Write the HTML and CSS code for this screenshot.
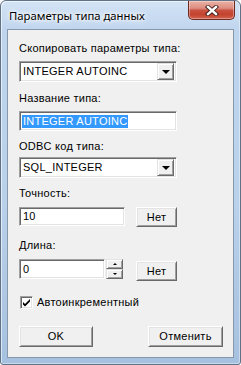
FILE: index.html
```html
<!DOCTYPE html>
<html lang="ru">
<head>
<meta charset="utf-8">
<title>Параметры типа данных</title>
<link rel="stylesheet" href="styles.css">
</head>
<body>
<div class="window">
  <div class="titlebar">
    <span class="title">Параметры типа данных</span>
    <div class="close">
      <svg width="14" height="11" viewBox="0 0 14 11">
        <path d="M3 2 L11 9 M11 2 L3 9" stroke="#3a1a16" stroke-width="4.2" stroke-linecap="square" fill="none"/>
        <path d="M3 2 L11 9 M11 2 L3 9" stroke="#ffffff" stroke-width="2.4" stroke-linecap="square" fill="none"/>
      </svg>
    </div>
  </div>
  <div class="client">
    <div class="label l1">Скопировать параметры типа:</div>
    <div class="field combo c1">
      <span class="val">INTEGER AUTOINC</span>
      <span class="drop"><span class="tri"></span></span>
    </div>
    <div class="label l2">Название типа:</div>
    <div class="field edit e2"><span class="sel">INTEGER AUTOINC</span></div>
    <div class="label l3">ODBC код типа:</div>
    <div class="field combo c2">
      <span class="val">SQL_INTEGER</span>
      <span class="drop"><span class="tri"></span></span>
    </div>
    <div class="label l4">Точность:</div>
    <div class="row r1">
      <div class="field edit e3"><span class="val">10</span></div>
      <div class="btn no1">Нет</div>
    </div>
    <div class="label l5">Длина:</div>
    <div class="row r2">
      <div class="field edit e4"><span class="val">0</span></div>
      <div class="spin">
        <div class="spinbtn"><span class="up"></span></div>
        <div class="spinbtn"><span class="down"></span></div>
      </div>
      <div class="btn no2">Нет</div>
    </div>
    <div class="check">
      <span class="box">
        <svg width="9" height="9" viewBox="0 0 9 9"><path d="M1 3 L1 5.5 L3 7.5 L8 2.5 L8 0 L3 5 Z" fill="#000"/></svg>
      </span>
      <span class="ctext">Автоинкрементный</span>
    </div>
    <div class="buttons">
      <div class="btn ok">OK</div>
      <div class="btn cancel">Отменить</div>
    </div>
  </div>
</div>
</body>
</html>
```

FILE: styles.css
```css
html, body {
  margin: 0;
  padding: 0;
  background: #ffffff;
}
body {
  width: 241px;
  height: 365px;
  overflow: hidden;
}
.window {
  box-sizing: border-box;
  width: 241px;
  height: 365px;
  border: 1px solid #5f7286;
  border-radius: 6px 6px 3px 3px;
  background: linear-gradient(to bottom, #d3e3f5 0px, #bfd5ee 30px, #b9d1eb 200px, #a6c1df 100%);
  box-shadow: inset 1px 1px 0 rgba(255,255,255,0.6), inset -1px -1px 0 rgba(255,255,255,0.4);
  display: flex;
  flex-direction: column;
}
.titlebar {
  height: 28px;
  display: flex;
  justify-content: space-between;
  align-items: flex-start;
  padding: 0 5px 0 8px;
}
.title {
  font-family: "Noto Sans", "Open Sans", sans-serif;
  font-size: 11.3px;
  line-height: 16px;
  margin-top: 7px;
  color: #000;
  text-shadow: 0 0 7px #ffffff, 0 0 5px #ffffff, 0 0 3px #ffffff;
}
.close {
  box-sizing: border-box;
  width: 47px;
  height: 19px;
  border: 1px solid #6e2a22;
  border-top: none;
  border-radius: 0 0 5px 5px;
  background: linear-gradient(to bottom, #eab1a5 0%, #dc8d7f 40%, #c8513f 52%, #c4432f 75%, #d0634e 100%);
  box-shadow: inset 0 0 0 1px rgba(255,255,255,0.35);
  display: flex;
  justify-content: center;
  align-items: center;
}
.client {
  box-sizing: border-box;
  height: 329px;
  margin: 0 6px;
  border: 1px solid #8898ab;
  background: #f0f0f0;
  padding: 12px 10px 0 11px;
  display: flex;
  flex-direction: column;
  align-items: flex-start;
  font-family: "Liberation Sans", Arial, sans-serif;
  font-size: 11px;
  letter-spacing: 0.25px;
  color: #000;
}
.label {
  height: 13px;
  line-height: 13px;
  white-space: nowrap;
}
.l2 { margin-top: 10px; }
.l3 { margin-top: 9px; }
.l4 { margin-top: 9px; }
.l5 { margin-top: 12px; }

.field {
  box-sizing: border-box;
  background: #ffffff;
  border: 1px solid;
  border-color: #a0a0a0 #ffffff #ffffff #a0a0a0;
  box-shadow: inset 1px 1px 0 #696969, inset -1px -1px 0 #e3e3e3;
  display: flex;
  align-items: center;
  padding-left: 3px;
  line-height: 13px;
  white-space: nowrap;
}
.combo {
  width: 158px;
  height: 21px;
  justify-content: space-between;
  padding-right: 2px;
}
.c1 { margin-top: 6px; }
.c2 { margin-top: 4px; }
.drop {
  box-sizing: border-box;
  width: 17px;
  height: 17px;
  background: #f0f0f0;
  border: 1px solid;
  border-color: #e3e3e3 #696969 #696969 #e3e3e3;
  box-shadow: inset 1px 1px 0 #ffffff, inset -1px -1px 0 #a0a0a0;
  display: flex;
  justify-content: center;
  align-items: center;
}
.tri {
  width: 0;
  height: 0;
  border-left: 4px solid transparent;
  border-right: 4px solid transparent;
  border-top: 4px solid #000;
  margin-top: 1px;
}
.edit { height: 20px; }
.e2 {
  width: 158px;
  margin-top: 6px;
  padding-left: 2px;
}
.sel {
  background: #3399ff;
  color: #ffffff;
  padding: 0 1px;
  line-height: 13px;
}
.row {
  display: flex;
  align-items: flex-start;
}
.r1 { margin-top: 7px; }
.r2 { margin-top: 7px; }
.e3 { width: 106px; height: 19px; }
.e4 { width: 86px; }

.btn {
  box-sizing: border-box;
  background: #f0f0f0;
  border: 1px solid;
  border-color: #ffffff #696969 #696969 #ffffff;
  box-shadow: inset 1px 1px 0 #e3e3e3, inset -1px -1px 0 #a0a0a0;
  display: flex;
  justify-content: center;
  align-items: center;
  line-height: 13px;
  white-space: nowrap;
}
.no1 { width: 41px; height: 20px; margin-left: 11px; }
.no2 { width: 41px; height: 20px; margin-left: 13px; margin-top: 2px; }

.spin {
  width: 17px;
  height: 20px;
  margin-left: 1px;
  display: flex;
  flex-direction: column;
}
.spinbtn {
  box-sizing: border-box;
  height: 10px;
  background: #f0f0f0;
  border: 1px solid;
  border-color: #e3e3e3 #696969 #696969 #e3e3e3;
  box-shadow: inset 1px 1px 0 #ffffff, inset -1px -1px 0 #a0a0a0;
  display: flex;
  justify-content: center;
  align-items: center;
}
.up {
  width: 0; height: 0;
  border-left: 2px solid transparent;
  border-right: 2px solid transparent;
  border-bottom: 2px solid #000;
}
.down {
  width: 0; height: 0;
  border-left: 2px solid transparent;
  border-right: 2px solid transparent;
  border-top: 2px solid #000;
}

.check {
  margin-top: 15px;
  margin-left: 1px;
  display: flex;
  align-items: center;
  height: 13px;
}
.box {
  box-sizing: border-box;
  width: 13px;
  height: 13px;
  background: #ffffff;
  border: 1px solid;
  border-color: #a0a0a0 #ffffff #ffffff #a0a0a0;
  box-shadow: inset 1px 1px 0 #696969, inset -1px -1px 0 #e3e3e3;
  display: flex;
  justify-content: center;
  align-items: center;
}
.box svg { display: block; margin: 1px 0 0 0; }
.ctext {
  margin-left: 4px;
  line-height: 13px;
}
.buttons {
  margin-top: 17px;
  width: 204px;
  display: flex;
  justify-content: space-between;
}
.ok { width: 74px; height: 21px; }
.cancel { width: 75px; height: 21px; }
```
